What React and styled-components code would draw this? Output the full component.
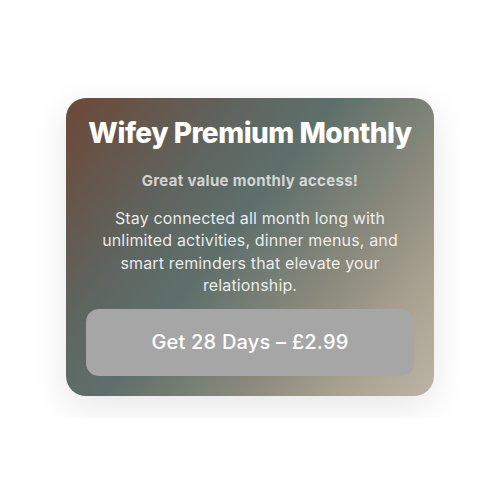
import React from "react";
import styled, { createGlobalStyle } from "styled-components";

const Global = createGlobalStyle`
  html, body {
    margin: 0;
    padding: 0;
    background: #ffffff;
    font-family: Inter, "Noto Sans", "Liberation Sans", sans-serif;
  }
`;

const Page = styled.main`
  min-height: 100vh;
  display: flex;
  align-items: center;
  justify-content: center;
`;

const Stage = styled.section`
  width: 100%;
  overflow: hidden;
  display: flex;
  justify-content: center;
  padding: 16px 0 22px;
`;

const Card = styled.div`
  width: 368px;
  box-sizing: border-box;
  padding: 19px 20px 20px;
  border-radius: 20px;
  background: linear-gradient(
    128deg,
    #6c4837 0%,
    #5f6560 30%,
    #5e6f6b 45%,
    #8a8a7c 68%,
    #aba392 85%,
    #bbb3a5 100%
  );
  box-shadow: 0 10px 36px rgba(0, 0, 0, 0.1);
  display: flex;
  flex-direction: column;
  align-items: center;
  text-align: center;
  color: #fff;
`;

const Title = styled.h1`
  margin: 0;
  font-size: 28px;
  font-weight: 800;
  line-height: 1.2;
  letter-spacing: -0.5px;
`;

const Tagline = styled.p`
  margin: 20px 0 0;
  font-size: 15px;
  font-weight: 700;
  letter-spacing: 0.3px;
  color: rgba(255, 255, 255, 0.72);
`;

const Blurb = styled.p`
  margin: 17px 0 0;
  font-size: 16px;
  line-height: 22.5px;
  letter-spacing: 0.15px;
  color: rgba(255, 255, 255, 0.88);
`;

const BuyButton = styled.button`
  margin-top: 12px;
  width: 100%;
  height: 67px;
  border: none;
  border-radius: 13px;
  background: #a6a6a6;
  color: #fff;
  font-family: inherit;
  font-size: 20px;
  font-weight: 500;
  letter-spacing: 0.2px;
  cursor: pointer;
`;

export default function App() {
  return (
    <>
      <Global />
      <Page>
        <Stage>
          <Card>
            <Title>Wifey Premium Monthly</Title>
            <Tagline>Great value monthly access!</Tagline>
            <Blurb>
              Stay connected all month long with unlimited activities, dinner
              menus, and smart reminders that elevate your relationship.
            </Blurb>
            <BuyButton>Get 28 Days – £2.99</BuyButton>
          </Card>
        </Stage>
      </Page>
    </>
  );
}
